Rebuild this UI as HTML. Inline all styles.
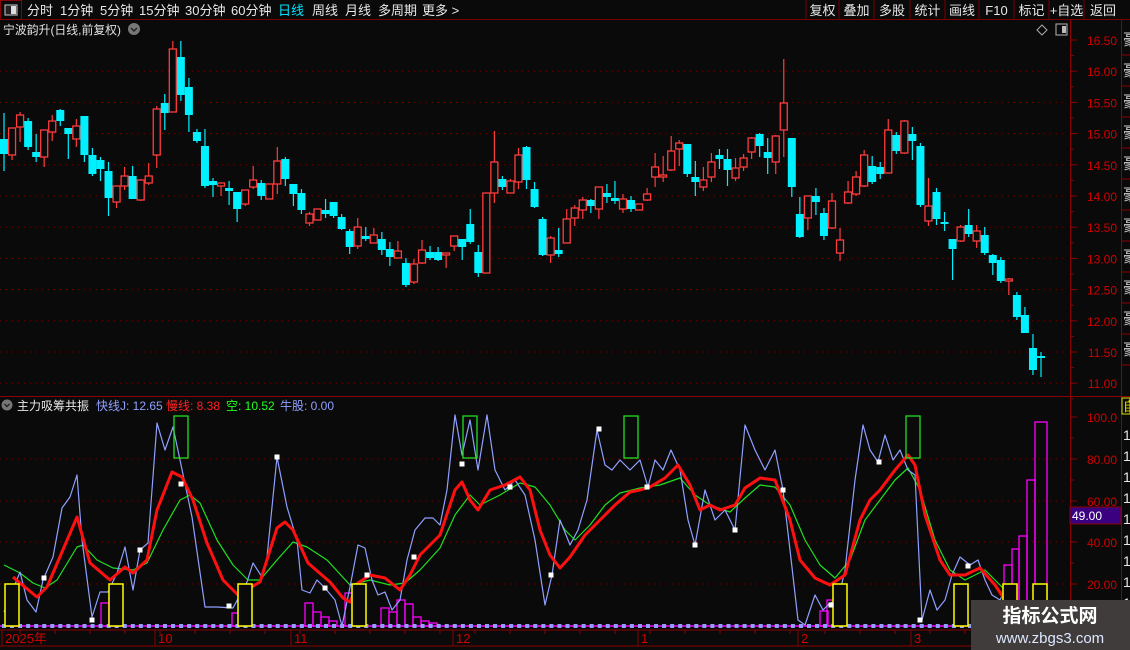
<!DOCTYPE html>
<html><head><meta charset="utf-8">
<style>
body{margin:0;background:#0a0a0a;width:1130px;height:650px;overflow:hidden;font-family:"Liberation Sans","Noto Sans CJK SC",sans-serif}
svg{position:absolute;left:0;top:0}
</style></head><body>
<svg id="s" width="1130" height="650" xmlns="http://www.w3.org/2000/svg" font-family="Liberation Sans, Noto Sans CJK SC, sans-serif"></svg>
<script>
var s=document.getElementById('s'),h='';
function R(x,y,w,hh,f,st,sw){h+='<rect x="'+x+'" y="'+y+'" width="'+w+'" height="'+hh+'" fill="'+(f||'none')+'"'+(st?' stroke="'+st+'" stroke-width="'+(sw||1)+'"':'')+'/>';}
function L(x1,y1,x2,y2,c,w,d){h+='<line x1="'+x1+'" y1="'+y1+'" x2="'+x2+'" y2="'+y2+'" stroke="'+c+'" stroke-width="'+(w||1)+'"'+(d?' stroke-dasharray="'+d+'"':'')+'/>';}
function T(x,y,t,c,sz,a,wt,tl){h+='<text x="'+x+'" y="'+y+'" fill="'+c+'" font-size="'+(sz||12)+'"'+(a?' text-anchor="'+a+'"':'')+(wt?' font-weight="'+wt+'"':'')+(tl?' textLength="'+tl+'" lengthAdjust="spacingAndGlyphs"':'')+'>'+t+'</text>';}
function P(pts,c,w){h+='<polyline points="'+pts.map(function(p){return p.join(',')}).join(' ')+'" fill="none" stroke="'+c+'" stroke-width="'+w+'" stroke-linejoin="round"/>';}
// top bar
R(0,0,1130,20,'#0a0a0a');L(0,19.5,1130,19.5,'#7a0000');
R(0.5,0.5,21,19,'none','#8b0000');R(5,5,12,10,'#222','#aaa',1.2);R(11,6,5,8,'#ddd');
var tb=[['分时',27],['1分钟',60],['5分钟',100],['15分钟',139],['30分钟',185],['60分钟',231],['日线',278],['周线',312],['月线',345],['多周期',378],['更多 >',422]];
tb.forEach(function(t){T(t[1],15,t[0],t[0]=='日线'?'#00e5ff':'#e8e8e8',13);});
var bx=[806,839,874,910,945,979,1014,1049,1084,1122],bl=['复权','叠加','多股','统计','画线','F10','标记','+自选','返回'];
for(var i=0;i<9;i++){L(bx[i],0,bx[i],19,'#7a0000');T((bx[i]+bx[i+1])/2,15,bl[i],'#e8e8e8',13,'middle');}
// title
T(3,34,'宁波韵升(日线,前复权)','#e0e0e0',12,null,null,118);
h+='<circle cx="134" cy="29" r="6" fill="#777"/><path d="M131 28 l3 3 l3 -3" stroke="#222" stroke-width="1.5" fill="none"/>';
h+='<path d="M1042 25 l5 5 l-5 5 l-5 -5z" fill="none" stroke="#aaa"/>';R(1056,24,11,11,'none','#999',1.2);R(1062,26,4,7,'#bbb');
// axes lines
L(1070.5,20,1070.5,650,'#8b0000');L(1121.5,20,1121.5,650,'#8b0000');
L(0,396.5,1070,396.5,'#8b0000',1);L(1070,396.5,1130,396.5,'#8b0000');
// price grid
for(var k=0;k<12;k++){var y=40+k*31.2;if(k>0)L(0,y,1068,y,'#7a0000',1,'1 5');L(1070,y,1077,y,'#8b0000');L(1070,y+15.6,1074,y+15.6,'#8b0000');T(1117,y+5,(16.5-k*0.5).toFixed(2),'#d00000',12,'end');}
for(var k=0;k<11;k++){T(1123,45+k*31,'豪','#cfcfcf',16);L(1121,55+k*31,1130,55+k*31,'#8b0000');}
// candles [top,bottom,high,low,red]
var C=[[139,154,113,171,0],[128,155,128,160,1],[115,127,112,142,1],[121,147,118,150,0],[152,157,134,162,0],[130,157,130,167,1],[121,132,115,141,1],[110,121,109,126,0],[128,134,128,159,0],[126,139,119,147,1],[116,155,116,162,0],[155,174,148,176,0],[160,169,157,181,0],[171,198,162,216,0],[186,202,186,208,1],[176,186,167,190,1],[176,199,166,199,0],[180,200,179,201,1],[176,183,163,185,1],[109,155,106,168,1],[103,113,94,130,0],[49,112,41,112,1],[57,95,41,101,0],[87,115,78,132,0],[132,141,129,143,0],[146,186,129,188,0],[181,185,178,197,0],[183,186,183,196,1],[188,191,181,205,0],[192,209,192,222,0],[190,204,190,206,1],[180,187,166,189,1],[183,196,180,200,0],[184,199,184,199,1],[161,184,147,194,1],[159,179,157,186,0],[184,194,184,206,0],[193,210,189,214,0],[214,223,212,226,1],[209,220,209,220,1],[210,214,199,218,0],[202,216,202,218,0],[217,229,214,230,0],[231,247,229,254,0],
[227,246,218,249,1],[236,239,227,241,0],[235,243,228,243,1],[239,250,232,255,0],[249,257,242,266,0],[251,258,241,258,1],[263,285,258,287,0],[264,282,259,284,1],[250,263,240,264,1],[252,258,246,260,0],[252,260,247,261,0],[253,255,253,268,1],[236,246,236,251,1],[239,247,239,260,0],[224,242,209,244,0],[252,273,245,277,0],[193,273,193,273,1],[162,193,131,203,1],[179,187,176,190,0],[181,193,179,193,1],[155,182,148,189,1],[147,180,146,189,0],[189,207,182,208,0],[219,255,217,256,0],[238,255,236,263,1],[250,254,228,257,0],[219,243,209,243,1],[208,218,205,226,1],[200,210,197,219,1],[200,206,199,213,0],[187,209,187,219,1],[193,197,184,203,0],[198,201,181,204,0],[199,209,194,213,1],[200,209,196,212,0],[204,210,204,210,1],[194,200,188,201,1],[167,177,153,187,1],[175,177,156,182,1],[151,170,136,171,1],[143,149,140,166,1],[144,174,144,177,0],[177,182,161,196,0],
[180,187,167,191,1],[162,177,153,182,1],[155,159,149,169,0],[159,170,149,186,0],[168,178,158,181,1],[158,167,154,171,1],[138,152,137,159,1],[134,146,133,157,0],[152,158,138,174,0],[136,162,135,174,1],[103,130,59,157,1],[138,187,138,197,0],[214,237,197,238,0],[196,218,196,230,1],[196,202,188,215,0],[213,236,208,240,0],[201,228,193,229,1],[240,253,228,261,1],[192,203,181,204,1],[177,194,171,196,1],[155,186,150,187,1],[166,182,156,184,0],[167,174,162,179,0],[130,173,119,173,1],[135,151,132,154,0],[121,153,120,154,1],[134,141,127,160,0],[146,205,143,207,0],[206,221,178,226,1],[192,219,188,225,0],[222,224,212,231,0],[239,249,239,280,0],[227,241,225,242,1],[225,234,209,237,0],[231,241,225,248,1],[235,253,227,255,0],[255,263,254,275,0],[260,281,257,283,0],[279,281,278,295,1],[295,317,292,320,0],[315,333,307,333,0],[348,370,334,375,0],[356,358,352,377,0]];
C.forEach(function(c,i){var x=4+i*(1037/(C.length-1));var col=c[4]?'#ff3c3c':'#00f0ff';
 L(x,c[2],x,c[3],col,1.2);var bh=Math.max(c[1]-c[0],2);
 if(c[4])R(x-3.5,c[0],7,bh,'#0a0a0a',col,1.3);else R(x-4,c[0],8,bh,col);});
// indicator
T(17,410,'主力吸筹共振','#e8e8e8',12);h+='<circle cx="7" cy="405" r="5.5" fill="#777"/><path d="M4.5 404 l2.5 2.5 l2.5 -2.5" stroke="#222" stroke-width="1.4" fill="none"/>';
T(96,410,'快线J: 12.65','#8fa0ff',12);T(166,410,'慢线: 8.38','#ff2020',12);T(226,410,'空: 10.52','#20ff20',12);T(280,410,'牛股: 0.00','#8fa0ff',12);
R(1122,398,8,16,'none','#dd0');T(1123,411,'自','#dd0',13);
var iy=[417,459,501,542,584];var il=['100.0','80.00','60.00','40.00','20.00'];
for(var k=0;k<5;k++){if(k>0)L(0,iy[k],1068,iy[k],'#7a0000',1,'1 5');L(1070,iy[k],1077,iy[k],'#8b0000');L(1070,iy[k]+21,1074,iy[k]+21,'#8b0000');T(1117,iy[k]+5,il[k],'#d00000',12,'end');}
for(var k=0;k<10;k++){T(1123,440+k*21,'1','#e8e8e8',14);}
R(1070,507,51,17,'#3a0080','#8b0000');T(1072,520,'49.00','#ffffff',12);
var M=[[101,603,8],[109,597,8],[305,603,8],[313,612,8],[321,617,8],[329,621,8],[345,593,8],[381,608,8],[389,612,8],[397,600,8],[405,604,8],[413,617,8],[421,621,8],[429,623,8],[232,613,8],[820,611,8],[827,600,8],[1004,565,8],[1012,549,7],[1019,536,8],[1027,480,8],[1035,422,12]];
M.forEach(function(m){R(m[0],m[1],m[2],626-m[1],'none','#ff00ff',1.3);});
var G=[[4,565],[20,573],[33,583],[45,588],[57,580],[77,547],[83,545],[97,560],[113,568],[133,570],[147,563],[163,530],[180,500],[190,495],[200,503],[217,540],[233,565],[248,580],[260,580],[277,560],[293,542],[307,547],[327,560],[350,585],[370,580],[390,585],[405,583],[420,570],[440,548],[455,515],[470,495],[480,505],[500,495],[520,483],[535,487],[550,505],[565,530],[575,540],[590,525],[605,505],[620,493],[640,488],[660,485],[680,478],[695,495],[710,505],[730,512],[745,498],[760,485],[775,487],[790,505],[805,540],[820,565],[835,578],[850,560],[865,520],[880,500],[895,480],[908,468],[920,490],[935,540],[950,570],[965,580],[985,570],[1000,585],[1015,600]];
var B=[[4,612],[20,572],[27,600],[36,612],[43,580],[53,557],[62,508],[70,497],[77,475],[82,540],[92,617],[100,592],[108,592],[117,573],[125,547],[133,590],[140,550],[148,543],[157,423],[165,450],[173,427],[180,460],[192,517],[205,607],[217,607],[233,608],[247,582],[253,563],[262,577],[267,557],[277,457],[287,507],[297,540],[302,590],[310,593],[317,580],[325,588],[335,600],[342,626],[350,587],[358,545],[365,548],[372,580],[378,595],[385,592],[392,610],[400,600],[407,560],[415,530],[425,518],[433,518],[440,525],[447,490],[455,415],[462,455],[470,420],[478,470],[487,415],[495,470],[505,490],[515,480],[525,495],[535,540],[545,605],[552,575],[560,520],[570,545],[578,530],[587,500],[597,430],[605,465],[612,470],[620,460],[630,470],[640,460],[648,487],[655,460],[663,470],[671,450],[680,470],[688,520],[695,545],[705,490],[715,520],[725,510],[735,530],[745,425],[755,450],[765,470],[775,450],[783,490],[790,550],[798,620],[805,625],[815,595],[823,610],[830,603],[838,600],[845,570],[855,480],[863,425],[870,450],[878,462],[885,435],[893,460],[900,450],[908,470],[915,475],[922,620],[930,590],[937,610],[945,600],[952,575],[960,557],[970,565],[978,560],[985,580],[992,595],[1000,600],[1005,590],[1012,610],[1020,620],[1030,625],[1040,622],[1048,622]];
var Rd=[[13,577],[20,583],[37,597],[47,587],[77,517],[90,563],[110,580],[125,567],[133,573],[147,560],[157,510],[172,472],[182,477],[193,500],[207,543],[223,580],[238,595],[260,582],[277,528],[285,522],[293,530],[308,563],[330,582],[343,598],[350,602],[358,583],[370,575],[385,578],[400,590],[410,575],[420,555],[440,535],[455,490],[462,482],[470,500],[478,510],[490,490],[505,485],[520,477],[530,490],[540,530],[550,555],[560,568],[570,557],[585,535],[600,520],[615,505],[630,492],[640,490],[650,487],[665,478],[678,465],[690,485],[700,510],[710,505],[720,510],[735,505],[745,488],[760,478],[775,480],[790,520],[800,560],[815,578],[830,585],[845,575],[860,520],[870,500],[880,490],[895,470],[908,455],[915,465],[925,515],[940,560],[950,575],[965,575],[980,568],[995,585],[1005,600],[1015,610]];
P(G,'#20e020',1.2);P(B,'#8fa0ff',1.2);P(Rd,'#ff1010',3);
L(0,626,1068,626,'#ff00ff',1.5);
for(var x=4;x<1068;x+=8.05)R(x-2,624,4,4,'#8fa0ff');
[5,109,238,352,833,954,1003,1033].forEach(function(x){R(x,584,14,42,'#0a0a0a','#ffff00',1.5);});
[174,463,624,906].forEach(function(x){R(x,416,14,42,'none','#20e020',1.3);});
[[44,578],[92,620],[140,550],[181,484],[229,606],[277,457],[325,588],[367,575],[414,557],[462,464],[510,487],[551,575],[599,429],[647,487],[695,545],[735,530],[783,490],[831,605],[879,462],[920,620],[968,566]].forEach(function(p){R(p[0]-2.5,p[1]-2.5,5,5,'#ffffff');});
L(0,630,1070,630,'#8b0000');L(0,646,1070,646,'#8b0000');
[[4,'2025年'],[157,'10'],[293,'11'],[455,'12'],[640,'1'],[800,'2'],[913,'3']].forEach(function(d){L(d[0]-2,630,d[0]-2,646,'#8b0000');T(d[0]+1,643,d[1],'#d00000',13);});
for(var x=20;x<1070;x+=35)L(x,630,x,634,'#8b0000');
R(971,600,159,50,'#403c3c');
T(1050,622,'指标公式网','#ffffff',19,'middle','bold');T(1050,643,'www.zbgs3.com','#dde8ff',15,'middle');
s.innerHTML=h;
</script>
</body></html>
